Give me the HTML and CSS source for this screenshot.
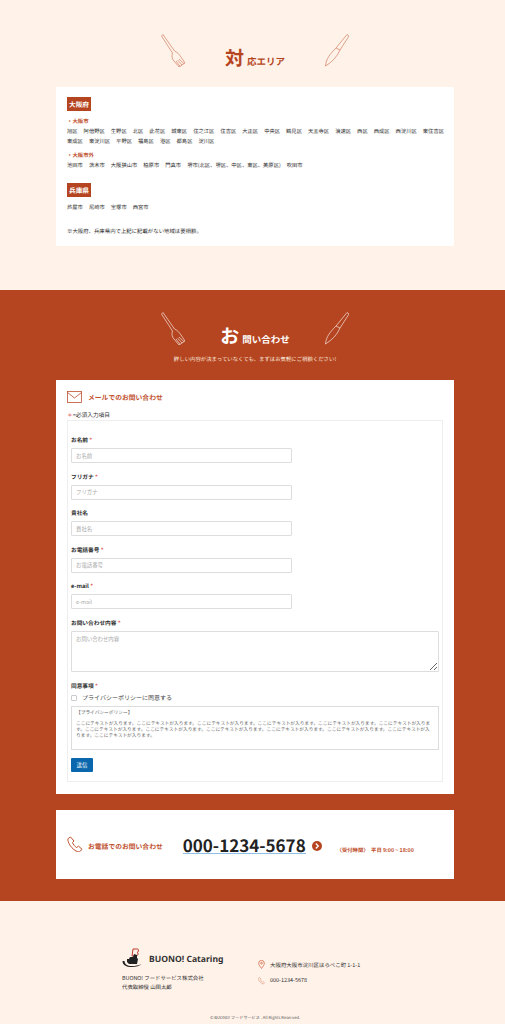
FILE: index.html
```html
<!DOCTYPE html>
<html lang="ja">
<head>
    <meta charset="UTF-8">
    <meta name="viewport" content="width=device-width, initial-scale=1.0">
    <title>BUONO! Cataring</title>
    <link rel="stylesheet" href="styles.css">
</head>
<body>
    <section class="area">
        <div class="heading">
            <svg class="cutlery" viewBox="0 0 24 33"><path d="M.5 2 2 .5 13.500 17C16 18 18 20 20 23L24 29 18 33 13 27C11 25 10.500 22 11.500 19zM15 27 19 32.300M16.500 26 21 31M18 25 23 29.700"/></svg>
            <h2 class="title">対<small>応エリア</small></h2>
            <svg class="cutlery" viewBox="0 0 24 33"><path d="M22 .5 24 2 15 16C12 23 7 28 .5 32 1 25 5 20 11 14zM11 14 15 16"/></svg>
        </div>
        <div class="area-card">
            <h3 class="tag">大阪府</h3>
            <p class="sub first">・大阪市</p>
            <ul class="places">
                <li>旭区</li><li>阿倍野区</li><li>生野区</li><li>北区</li><li>此花区</li><li>城東区</li><li>住之江区</li><li>住吉区</li><li>大正区</li><li>中央区</li><li>鶴見区</li><li>天王寺区</li><li>浪速区</li><li>西区</li><li>西成区</li><li>西淀川区</li><li>東住吉区</li><li>東成区</li><li>東淀川区</li><li>平野区</li><li>福島区</li><li>港区</li><li>都島区</li><li>淀川区</li>
            </ul>
            <p class="sub">・大阪市外</p>
            <ul class="places">
                <li>池田市</li><li>茨木市</li><li>大阪狭山市</li><li>柏原市</li><li>門真市</li><li>堺市(北区、堺区、中区、東区、美原区)</li><li>吹田市</li>
            </ul>
            <h3 class="tag second">兵庫県</h3>
            <ul class="places hyogo">
                <li>芦屋市</li><li>尼崎市</li><li>宝塚市</li><li>西宮市</li>
            </ul>
            <p class="note">※大阪府、兵庫県内で上記に記載がない地域は要相談。</p>
        </div>
    </section>

    <section class="contact">
        <div class="heading">
            <svg class="cutlery" viewBox="0 0 24 33"><path d="M.5 2 2 .5 13.500 17C16 18 18 20 20 23L24 29 18 33 13 27C11 25 10.500 22 11.500 19zM15 27 19 32.300M16.500 26 21 31M18 25 23 29.700"/></svg>
            <h2 class="title">お<small>問い合わせ</small></h2>
            <svg class="cutlery" viewBox="0 0 24 33"><path d="M22 .5 24 2 15 16C12 23 7 28 .5 32 1 25 5 20 11 14zM11 14 15 16"/></svg>
        </div>
        <p class="lead">詳しい内容が決まっていなくても、まずはお気軽にご相談ください!</p>

        <div class="form-card">
            <div class="method">
                <svg class="mail-icon" viewBox="0 0 15 12"><rect x=".5" y=".5" width="14" height="11"/><path d="M.5 1.500 7.500 7l7-5.500"/></svg>
                <h3>メールでのお問い合わせ</h3>
            </div>
            <p class="required"><span>＊</span>=必須入力項目</p>
            <form class="form-box">
                <label class="label">お名前 <span>*</span></label>
                <input class="input" type="text" placeholder="お名前">
                <label class="label">フリガナ <span>*</span></label>
                <input class="input" type="text" placeholder="フリガナ">
                <label class="label">貴社名</label>
                <input class="input" type="text" placeholder="貴社名">
                <label class="label">お電話番号 <span>*</span></label>
                <input class="input" type="text" placeholder="お電話番号">
                <label class="label">e-mail <span>*</span></label>
                <input class="input" type="text" placeholder="e-mail">
                <label class="label">お問い合わせ内容 <span>*</span></label>
                <textarea class="input message" placeholder="お問い合わせ内容"></textarea>
                <label class="label agree-label">同意事項 <span>*</span></label>
                <div class="agree"><input class="check" type="checkbox"><span>プライバシーポリシーに同意する</span></div>
                <div class="policy">
                    <p>【プライバシーポリシー】</p>
                    <p>ここにテキストが入ります。ここにテキストが入ります。ここにテキストが入ります。ここにテキストが入ります。ここにテキストが入ります。ここにテキストが入ります。ここにテキストが入ります。ここにテキストが入ります。ここにテキストが入ります。ここにテキストが入ります。ここにテキストが入ります。ここにテキストが入ります。ここにテキストが入ります。</p>
                </div>
                <button class="send" type="button">送信</button>
            </form>
        </div>

        <div class="tel-card">
            <div class="method tel-method">
                <svg class="tel-icon" viewBox="0 0 16 16"><path d="M3.500 1 1.500 2.200C.5 3 .8 5 2 7.500c1.500 3 4 5.800 7 7.500 2 1 3.500 1 4.500 0l1.500-1.800-3.500-3-2 1.300c-1.500-.8-3.500-3.200-4-5l1.500-1.500z"/></svg>
                <h3>お電話でのお問い合わせ</h3>
            </div>
            <a class="tel-number">000-1234-5678</a>
            <svg class="arrow" viewBox="0 0 10 10"><circle cx="5" cy="5" r="5"/><path d="M3.800 2.500 6.300 5 3.800 7.500"/></svg>
            <p class="hours">〈受付時間〉　平日 9:00 ~ 18:00</p>
        </div>
    </section>

    <footer class="footer">
        <div class="footer-main">
            <div class="company">
                <div class="brand">
                    <svg class="logo" viewBox="0 0 20 20"><path class="logo-b" d="M11 1h4.500c1.500 0 1.500 3-.5 3.500 2 .5 1 3.500-1 3.500H10z"/><path d="M5 11h2l1-2h3l1-3 3 1v3l1 1-1 5H7l-2-2z"/><path class="logo-arc" d="M.5 13c0 4 4 6 9 6s8-1 10-3c-3 1.500-6 2-10 2s-7-2-7-5z"/></svg>
                    <strong>BUONO! Cataring</strong>
                </div>
                <p>BUONO! フードサービス株式会社</p>
                <p>代表取締役 山田太郎</p>
            </div>
            <div class="address">
                <div class="address-row">
                    <svg class="small-icon" viewBox="0 0 8 10"><path d="M4 9.500C2.500 7.500 .8 5.500.8 3.500a3.200 3.200 0 0 1 6.400 0C7.200 5.500 5.500 7.500 4 9.500z"/><circle cx="4" cy="3.500" r="1"/></svg>
                    <span>大阪府大阪市淀川区はらぺこ町 1-1-1</span>
                </div>
                <div class="address-row">
                    <svg class="small-icon" viewBox="0 0 16 16"><path d="M3.500 1 1.500 2.200C.5 3 .8 5 2 7.500c1.500 3 4 5.800 7 7.500 2 1 3.500 1 4.500 0l1.500-1.800-3.500-3-2 1.300c-1.500-.8-3.500-3.200-4-5l1.500-1.500z"/></svg>
                    <span>000-1234-5678</span>
                </div>
            </div>
        </div>
        <p class="copyright">© BUONO! フードサービス . All Rights Reserved.</p>
    </footer>
</body>
</html>
```

FILE: styles.css
```css
* {
    box-sizing: border-box;
}
body {
    margin: 0;
    background: #fff2e9;
    color: #2e2e2e;
    font-family: "Noto Sans CJK JP", "Noto Sans", sans-serif;
    font-size: 5.4px;
    line-height: 10px;
    text-rendering: geometricPrecision;
}
h2, h3, p, ul {
    margin: 0;
    padding: 0;
}
.area {
    height: 290px;
    padding: 34px 51px 0 56px;
}
.heading {
    display: flex;
    justify-content: center;
    height: 33px;
}
.cutlery {
    width: 24px;
    height: 33px;
    fill: none;
    stroke: #c9694a;
    stroke-width: .6;
}
.contact .cutlery {
    stroke: #fff;
}
.title {
    width: 140px;
    padding-top: 11px;
    text-align: center;
    color: #b54521;
    font-size: 19px;
    line-height: 26px;
    font-weight: 700;
}
.title small {
    margin-left: 3px;
    font-size: 9.5px;
}
.area-card {
    height: 159px;
    margin-top: 20px;
    padding: 10px 9px 10px 11px;
    background: #fff;
}
.tag {
    display: inline-block;
    height: 14px;
    padding: 0 2px;
    background: #b54521;
    color: #fff;
    font-size: 6.7px;
    line-height: 14px;
    font-weight: 700;
}
.tag.second {
    display: block;
    width: fit-content;
    margin-top: 13px;
}
.sub {
    margin-top: 4px;
    color: #c0512e;
    font-weight: 700;
}
.sub.first {
    margin-top: 5px;
}
.places {
    display: flex;
    flex-wrap: wrap;
    column-gap: 6px;
    list-style: none;
    font-size: 5.3px;
}
.hyogo {
    margin-top: 5px;
}
.note {
    margin-top: 13.5px;
}
.contact {
    height: 611px;
    padding: 22px 51px 0 56px;
    background: #b54521;
}
.contact .title {
    color: #fff;
}
.lead {
    margin-top: 9px;
    text-align: center;
    color: #fbe6da;
}
.form-card {
    height: 414px;
    margin-top: 16px;
    padding: 11px 11px 0;
    background: #fff;
}
.method {
    display: flex;
    align-items: center;
    gap: 6px;
    height: 12px;
}
.method h3 {
    color: #c0512e;
    font-size: 6.8px;
    line-height: 12px;
    font-weight: 700;
}
.mail-icon {
    width: 15px;
    height: 12px;
    fill: none;
    stroke: #c0512e;
    stroke-width: .8;
}
.required {
    margin-top: 7px;
    height: 10px;
    font-size: 5.7px;
}
.required span {
    color: #e25b5b;
}
.form-box {
    display: flex;
    flex-direction: column;
    align-items: flex-start;
    height: 362px;
    padding: 14px 3px 0;
    border: 1px solid #eee;
}
.label {
    height: 10px;
    margin-bottom: 3px;
    font-size: 5.7px;
    font-weight: 700;
}
.label span {
    color: #e25b5b;
}
.input {
    display: block;
    flex: none;
    width: 221px;
    height: 15px;
    margin-bottom: 8.6px;
    padding: 0 4px;
    border: 1px solid #ddd;
    border-radius: 1px;
    background: #fff;
    font-family: inherit;
    font-size: 5.4px;
}
.input::placeholder {
    color: #aaa;
}
.message {
    width: 368px;
    height: 41px;
    padding: 3px 4px;
}
.agree-label {
    margin-bottom: 2px;
}
.agree {
    display: flex;
    align-items: center;
    gap: 5px;
    height: 10px;
    margin-bottom: 3px;
    font-size: 6px;
    color: #444;
}
.check {
    appearance: none;
    width: 6px;
    height: 6px;
    margin: 0;
    border: 1px solid #ccc;
    border-radius: 1px;
}
.policy {
    flex: none;
    width: 368px;
    height: 44px;
    padding: 3px 7.5px 3px 4px;
    border: 1px solid #ddd;
    color: #666;
    font-size: 4.72px;
    line-height: 6px;
}
.policy p:first-child {
    margin-bottom: 5px;
}
.send {
    flex: none;
    width: 22px;
    height: 14px;
    margin-top: 8px;
    padding: 0;
    border: none;
    border-radius: 1px;
    background: #0b67ad;
    color: #fff;
    font-family: inherit;
    font-size: 5.4px;
}
.tel-card {
    display: flex;
    align-items: center;
    height: 69px;
    margin-top: 16px;
    padding-left: 11px;
    background: #fff;
}
.tel-method {
    gap: 5px;
    height: 16px;
    margin-top: -1px;
}
.tel-method h3 {
    padding-top: 3px;
}
.tel-icon {
    width: 16px;
    height: 16px;
    fill: none;
    stroke: #c0512e;
    stroke-width: 1;
}
.tel-number {
    margin-left: 20px;
    border-bottom: 1px solid #8cc0ea;
    color: #222;
    font-size: 17px;
    line-height: 17px;
    font-weight: 700;
}
.arrow {
    width: 10px;
    height: 10px;
    margin: 2px 0 0 6px;
    fill: #b54521;
    stroke: none;
}
.arrow path {
    fill: none;
    stroke: #fff;
    stroke-width: 1.300;
}
.hours {
    margin: 10px 0 0 15px;
    color: #c0512e;
    font-size: 5.300px;
    font-weight: 700;
}
.footer {
    height: 123px;
    padding-top: 47px;
}
.footer-main {
    display: flex;
    height: 62px;
    padding-left: 122px;
}
.company {
    width: 136px;
    font-size: 5.4px;
    line-height: 9.500px;
}
.brand {
    display: flex;
    align-items: center;
    gap: 7px;
    height: 20px;
    margin-bottom: 5.5px;
    color: #333;
}
.brand strong {
    font-family: "Noto Sans", sans-serif;
    font-size: 8.6px;
    font-weight: 700;
    line-height: 20px;
    margin-top: 1px;
}
.logo {
    width: 20px;
    height: 20px;
    fill: #222;
}
.logo .logo-b {
    fill: none;
    stroke: #c0392b;
    stroke-width: 1;
}
.address {
    padding-top: 9px;
}
.address-row {
    display: flex;
    align-items: center;
    gap: 5px;
    height: 15.5px;
    font-size: 5.45px;
}
.small-icon {
    width: 7px;
    height: 9px;
    fill: none;
    stroke: #d0694a;
    stroke-width: .9;
}
.copyright {
    margin-top: 3px;
    padding-left: 5px;
    text-align: center;
    font-size: 4.100px;
    color: #555;
}
```
